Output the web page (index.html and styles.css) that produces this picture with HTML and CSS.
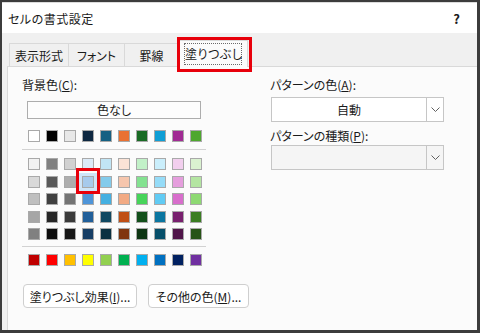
FILE: index.html
```html
<!DOCTYPE html>
<html lang="ja">
<head>
  <meta charset="UTF-8" />
  <title>セルの書式設定</title>
  <link rel="stylesheet" href="styles.css">
</head>
<body>
  <div class="dialog">
    <div class="titlebar">
      <span class="title">セルの書式設定</span>
      <span class="help">?</span>
    </div>

    <div class="client">
      <div class="tabs">
        <div class="tab tab-1">表示形式</div>
        <div class="tab tab-2">フォント</div>
        <div class="tab tab-3">罫線</div>
        <div class="tab tab-active">
          <span class="focus">塗りつぶし</span>
          <span class="mark mark-tab"></span>
        </div>
      </div>

      <div class="panel">
        <div class="col-left">
          <div class="label">背景色(<u>C</u>):</div>
          <button class="no-color">色なし</button>

          <!-- theme colors -->
          <div class="swatch-row theme">
            <span class="swatch" style="background:#ffffff"></span>
            <span class="swatch" style="background:#000000"></span>
            <span class="swatch" style="background:#e8e8e8"></span>
            <span class="swatch" style="background:#0e2841"></span>
            <span class="swatch" style="background:#156082"></span>
            <span class="swatch" style="background:#e97132"></span>
            <span class="swatch" style="background:#196b24"></span>
            <span class="swatch" style="background:#0f9ed5"></span>
            <span class="swatch" style="background:#a02b93"></span>
            <span class="swatch" style="background:#4ea72e"></span>
          </div>

          <hr class="sep">

          <!-- tints and shades -->
          <div class="swatch-grid">
            <span class="swatch" style="background:#f2f2f2"></span>
            <span class="swatch" style="background:#808080"></span>
            <span class="swatch" style="background:#d1d1d1"></span>
            <span class="swatch" style="background:#dceaf7"></span>
            <span class="swatch" style="background:#c1e5f5"></span>
            <span class="swatch" style="background:#fbe3d6"></span>
            <span class="swatch" style="background:#c2f1c8"></span>
            <span class="swatch" style="background:#caeefb"></span>
            <span class="swatch" style="background:#f2cfee"></span>
            <span class="swatch" style="background:#daf2d0"></span>

            <span class="swatch" style="background:#d9d9d9"></span>
            <span class="swatch" style="background:#595959"></span>
            <span class="swatch" style="background:#aeaeae"></span>
            <span class="swatch selected" style="background:#a7caec"><span class="mark mark-swatch"></span></span>
            <span class="swatch" style="background:#83cbeb"></span>
            <span class="swatch" style="background:#f6c6ad"></span>
            <span class="swatch" style="background:#84e291"></span>
            <span class="swatch" style="background:#96dcf8"></span>
            <span class="swatch" style="background:#e59edd"></span>
            <span class="swatch" style="background:#b4e5a2"></span>

            <span class="swatch" style="background:#bfbfbf"></span>
            <span class="swatch" style="background:#404040"></span>
            <span class="swatch" style="background:#747474"></span>
            <span class="swatch" style="background:#4e95d9"></span>
            <span class="swatch" style="background:#45b0e1"></span>
            <span class="swatch" style="background:#f2aa84"></span>
            <span class="swatch" style="background:#47d45a"></span>
            <span class="swatch" style="background:#61cbf4"></span>
            <span class="swatch" style="background:#d86ecc"></span>
            <span class="swatch" style="background:#8ed973"></span>

            <span class="swatch" style="background:#a6a6a6"></span>
            <span class="swatch" style="background:#262626"></span>
            <span class="swatch" style="background:#3a3a3a"></span>
            <span class="swatch" style="background:#215f9a"></span>
            <span class="swatch" style="background:#104861"></span>
            <span class="swatch" style="background:#c04f15"></span>
            <span class="swatch" style="background:#13501b"></span>
            <span class="swatch" style="background:#0b76a0"></span>
            <span class="swatch" style="background:#78206e"></span>
            <span class="swatch" style="background:#3a7d22"></span>

            <span class="swatch" style="background:#808080"></span>
            <span class="swatch" style="background:#0d0d0d"></span>
            <span class="swatch" style="background:#171717"></span>
            <span class="swatch" style="background:#163e65"></span>
            <span class="swatch" style="background:#0a3041"></span>
            <span class="swatch" style="background:#80350e"></span>
            <span class="swatch" style="background:#0d3512"></span>
            <span class="swatch" style="background:#074f6a"></span>
            <span class="swatch" style="background:#501549"></span>
            <span class="swatch" style="background:#275317"></span>
          </div>

          <hr class="sep sep-2">

          <!-- standard colors -->
          <div class="swatch-row standard">
            <span class="swatch" style="background:#c00000"></span>
            <span class="swatch" style="background:#ff0000"></span>
            <span class="swatch" style="background:#ffc000"></span>
            <span class="swatch" style="background:#ffff00"></span>
            <span class="swatch" style="background:#92d050"></span>
            <span class="swatch" style="background:#00b050"></span>
            <span class="swatch" style="background:#00b0f0"></span>
            <span class="swatch" style="background:#0070c0"></span>
            <span class="swatch" style="background:#002060"></span>
            <span class="swatch" style="background:#7030a0"></span>
          </div>

          <div class="actions">
            <button class="btn btn-effects">塗りつぶし効果(<u>I</u>)...</button>
            <button class="btn btn-more">その他の色(<u>M</u>)...</button>
          </div>
        </div>

        <div class="col-right">
          <div class="label">パターンの色(<u>A</u>):</div>
          <div class="select">
            <span class="value">自動</span>
            <span class="arrow">
              <svg width="9" height="5" viewBox="0 0 9 5"><path d="M0.5 0.5 L4.5 4.5 L8.5 0.5" fill="none" stroke="#606060" stroke-width="1"/></svg>
            </span>
          </div>
          <div class="label label-2">パターンの種類(<u>P</u>):</div>
          <div class="select select-off">
            <span class="value"></span>
            <span class="arrow">
              <svg width="9" height="5" viewBox="0 0 9 5"><path d="M0.5 0.5 L4.5 4.5 L8.5 0.5" fill="none" stroke="#606060" stroke-width="1"/></svg>
            </span>
          </div>
        </div>
      </div>
    </div>
  </div>
</body>
</html>
```

FILE: styles.css
```css
* { margin: 0; padding: 0; box-sizing: border-box; }

html, body {
  width: 480px;
  height: 333px;
  overflow: hidden;
}

body {
  font-family: "Noto Sans CJK JP", "Noto Sans", sans-serif;
  font-size: 12px;
  font-feature-settings: "palt";
  color: #1a1a1a;
  white-space: nowrap;
}

.dialog {
  width: 480px;
  height: 333px;
  display: flex;
  flex-direction: column;
  background: #f0f0f0;
  border-style: solid;
  border-color: #3c3c3c;
  border-width: 2px 3px 3px 2px;
}

.titlebar {
  height: 31px;
  background: #fff;
  border-top: 1px solid #dcdcdc;
  display: flex;
  align-items: center;
  justify-content: space-between;
  padding: 0 17px 0 6px;
}

.title { letter-spacing: 0.5px; }

.help {
  font-weight: bold;
  font-size: 13px;
}

.client {
  flex: 1;
  display: flex;
  flex-direction: column;
  padding-left: 5px;
}

/* tab strip */
.tabs {
  height: 33px;
  display: flex;
  align-items: flex-end;
  padding-left: 2px;
}

.tab {
  height: 23px;
  display: flex;
  align-items: center;
  justify-content: center;
  background: #f0f0f0;
  border: 1px solid #d9d9d9;
  border-bottom: none;
  margin-right: -1px;
}

.tab-1 { width: 60px; }
.tab-2 { width: 57px; }
.tab-3 { width: 55px; }

.tab-active {
  width: 70px;
  height: 27px;
  margin-bottom: -1px;
  background: #fbfbfb;
  position: relative;
  z-index: 1;
}

.focus {
  display: block;
  width: 58px;
  height: 22px;
  line-height: 20px;
  text-align: center;
  letter-spacing: 0.5px;
  border: 1px dotted #6a6a6a;
}

/* red annotation frames */
.mark {
  position: absolute;
  border: 3px solid #e8000b;
  pointer-events: none;
}

.mark-tab {
  left: -2px;
  top: -4px;
  width: 75px;
  height: 35px;
}

/* page */
.panel {
  flex: 1;
  display: flex;
  background: #fbfbfb;
  border: 1px solid #d9d9d9;
  border-right: none;
  border-bottom: none;
  padding: 10px 0 0 14px;
}

.col-left { width: 185px; }

.col-right {
  width: 174px;
  margin-left: 63px;
}

.label {
  line-height: 16px;
  height: 16px;
}

.no-color {
  display: block;
  width: 174px;
  height: 18px;
  margin: 8px 0 0 5px;
  border: 1px solid #adadad;
  background: #fdfdfd;
  font: inherit;
  color: inherit;
  line-height: 16px;
}

.swatch-row {
  display: flex;
  gap: 6px;
  margin-left: 6px;
}

.theme { margin-top: 11px; }
.standard { margin-top: 7px; }

.sep {
  border: none;
  border-top: 1px solid #d2d2d2;
  width: 184px;
  height: 0;
  margin-top: 7px;
}

.sep-2 { margin-top: 6px; }

.swatch-grid {
  display: grid;
  grid-template-columns: repeat(10, 12px);
  column-gap: 6px;
  row-gap: 5.5px;
  margin: 8px 0 0 6px;
}

.swatch {
  display: block;
  width: 12px;
  height: 12px;
  border: 1px solid #a9a9a9;
}

.selected {
  position: relative;
  box-shadow: 0 0 0 3px #cfe5f8;
}

.mark-swatch {
  left: -7px;
  top: -9px;
  width: 24px;
  height: 26px;
}

.actions {
  display: flex;
  gap: 11px;
  margin: 18px 0 0 1px;
}

.btn {
  flex-shrink: 0;
  height: 24px;
  border: 1px solid #cfcfcf;
  border-radius: 4px;
  background: #fff;
  font: inherit;
  color: inherit;
  white-space: nowrap;
}

.btn-effects { width: 114px; }
.btn-more { width: 101px; }

/* right column */
.select {
  display: flex;
  width: 173px;
  height: 25px;
  margin: 4px 0 0 1px;
  background: #fff;
  border: 1px solid #c6c6c6;
}

.select-off {
  background: #f5f5f5;
  margin-top: 1px;
}

.label-2 { margin-top: 6px; }

.value {
  flex: 1;
  text-align: center;
  line-height: 23px;
}

.arrow {
  width: 17px;
  display: flex;
  align-items: center;
  justify-content: center;
  border-left: 1px solid #c6c6c6;
}
```
